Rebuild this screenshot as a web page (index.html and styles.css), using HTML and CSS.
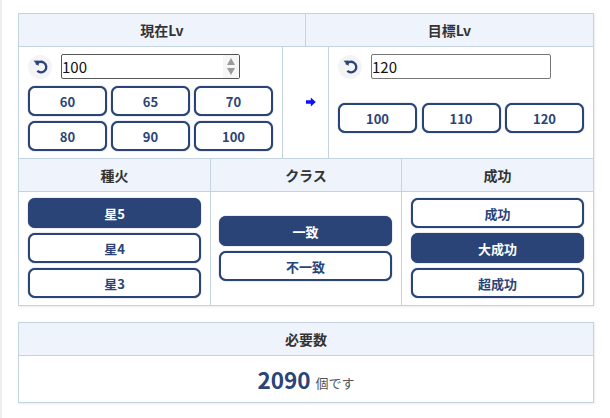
FILE: index.html
```html
<!DOCTYPE html>
<html lang="ja">
<head>
<meta charset="utf-8">
<title>必要数</title>
<link rel="stylesheet" href="styles.css">
</head>
<body>
<main class="page">
  <section class="card">
    <div class="head-row">
      <h2 class="head">現在Lv</h2>
      <h2 class="head">目標Lv</h2>
    </div>
    <div class="levels">
      <div class="level">
        <div class="input-row">
          <button class="reset" type="button" aria-label="reset">
            <svg viewBox="0 0 16 16" width="17" height="17"><path d="M4 6.2A5 5 0 1 1 5 12.2" fill="none" stroke="#2a4478" stroke-width="2.2"/><path d="M1.4 2.6 6.4 2.4 6.2 7.6Z" fill="#2a4478"/></svg>
          </button>
          <div class="field">
            <input class="num" type="text" value="100">
            <span class="spin"><i class="up"></i><i class="down"></i></span>
          </div>
        </div>
        <div class="btn-grid">
          <button class="btn" type="button">60</button>
          <button class="btn" type="button">65</button>
          <button class="btn" type="button">70</button>
          <button class="btn" type="button">80</button>
          <button class="btn" type="button">90</button>
          <button class="btn" type="button">100</button>
        </div>
      </div>
      <div class="arrow-cell">
        <svg viewBox="0 0 10 10" width="10" height="10"><path d="M0 3.2H4.8V0.4L9.8 5 4.8 9.6V6.8H0Z" fill="#0f0fff"/></svg>
      </div>
      <div class="level">
        <div class="input-row">
          <button class="reset" type="button" aria-label="reset">
            <svg viewBox="0 0 16 16" width="17" height="17"><path d="M4 6.2A5 5 0 1 1 5 12.2" fill="none" stroke="#2a4478" stroke-width="2.2"/><path d="M1.4 2.6 6.4 2.4 6.2 7.6Z" fill="#2a4478"/></svg>
          </button>
          <div class="field field-target">
            <input class="num num-target" type="text" value="120">
          </div>
        </div>
        <div class="btn-grid btn-grid-target">
          <button class="btn" type="button">100</button>
          <button class="btn" type="button">110</button>
          <button class="btn" type="button">120</button>
        </div>
      </div>
    </div>
    <div class="options">
      <div class="option">
        <h2 class="head">種火</h2>
        <div class="stack">
          <button class="btn on" type="button">星5</button>
          <button class="btn" type="button">星4</button>
          <button class="btn" type="button">星3</button>
        </div>
      </div>
      <div class="option">
        <h2 class="head">クラス</h2>
        <div class="stack stack-middle">
          <button class="btn on" type="button">一致</button>
          <button class="btn" type="button">不一致</button>
        </div>
      </div>
      <div class="option">
        <h2 class="head">成功</h2>
        <div class="stack">
          <button class="btn" type="button">成功</button>
          <button class="btn on" type="button">大成功</button>
          <button class="btn" type="button">超成功</button>
        </div>
      </div>
    </div>
  </section>
  <section class="card result">
    <h2 class="head">必要数</h2>
    <p class="total"><strong>2090</strong> <span>個です</span></p>
  </section>
</main>
</body>
</html>
```
FILE: styles.css
```css
* { box-sizing: border-box; }
html, body { margin: 0; padding: 0; background: #fff; }
body {
  height: 418px;
  overflow: hidden;
  font-family: "Noto Sans CJK JP", "Noto Sans", sans-serif;
  border-left: 2px solid #eeeeee;
}
.page { padding: 13px 0 0 16px; }
.card {
  width: 576px;
  border: 1px solid #c3d4e0;
  box-shadow: 1px 1px 2px rgba(0,0,0,.08);
  background: #fff;
}
.head {
  margin: 0;
  height: 33px;
  background: #eff3fb;
  border-bottom: 1px solid #c3d4e0;
  font-size: 14px;
  line-height: 33px;
  font-weight: 700;
  color: #333;
  text-align: center;
}
.head-row { display: grid; grid-template-columns: 286px 288px; }
.head-row .head + .head { border-left: 1px solid #c3d4e0; }
.levels {
  display: grid;
  grid-template-columns: 264px 45px 265px;
  height: 112px;
  border-bottom: 1px solid #c3d4e0;
}
.level { padding: 7px 9px 0; }
.level:first-child { border-right: 1px solid #c3d4e0; }
.level:last-child { border-left: 1px solid #c3d4e0; }
.arrow-cell {
  display: flex;
  align-items: center;
  justify-content: center;
  padding: 0 0 1px 11px;
}
.input-row { display: flex; align-items: center; gap: 9px; height: 25px; }
.reset {
  flex: none;
  width: 24px; height: 24px; padding: 0; border: 0; border-radius: 50%;
  background: #f4f4f6;
  display: flex; align-items: center; justify-content: center;
}
.field { position: relative; flex: none; width: 179px; height: 25px; }
.field-target { width: 180px; }
.num {
  width: 100%; height: 100%;
  border: 1px solid #555;
  border-radius: 2px;
  padding: 0;
  font: 15px "Noto Sans CJK JP", sans-serif;
  color: #111;
  background: #fff;
  outline: 0;
}
.num-target { border-color: #767676; }
.spin {
  position: absolute; right: 1px; top: 1px; bottom: 1px; width: 16px;
  background: #f6f6f6;
  display: flex; flex-direction: column; align-items: center; justify-content: center; gap: 3px;
}
.spin i { width: 0; height: 0; border-left: 4.5px solid transparent; border-right: 4.5px solid transparent; }
.spin .up { border-bottom: 7px solid #9a9a9a; }
.spin .down { border-top: 7px solid #9a9a9a; }
.btn-grid {
  display: grid;
  grid-template-columns: 79px 79px 79px;
  justify-content: space-between;
  row-gap: 5px;
  margin-top: 7px;
}
.btn-grid-target { margin-top: 24px; }
.btn {
  height: 30px;
  padding: 0;
  border: 2px solid #2a4478;
  border-radius: 7px;
  background: #fff;
  color: #2a4478;
  font: 700 13px "Noto Sans CJK JP", sans-serif;
  box-shadow: 0 0 1px #2a4478;
}
.btn.on { background: #2a4478; color: #fff; }
.options { display: grid; grid-template-columns: 191px 191px 192px; }
.option { display: flex; flex-direction: column; height: 146px; }
.option + .option { border-left: 1px solid #c3d4e0; }
.stack {
  flex: 1;
  display: flex; flex-direction: column; gap: 5px;
  padding: 6px 9px 0;
}
.stack-middle { padding: 24px 9px 0 8px; }
.result { margin-top: 16px; height: 81px; }
.total {
  margin: 0; height: 47px;
  display: flex; align-items: center; justify-content: center; gap: 5px;
  color: #555;
}
.total strong { font-size: 22.5px; font-weight: 700; color: #2a4478; line-height: 1; }
.total span { font-size: 13px; font-weight: 400; padding-top: 5px; }
```
